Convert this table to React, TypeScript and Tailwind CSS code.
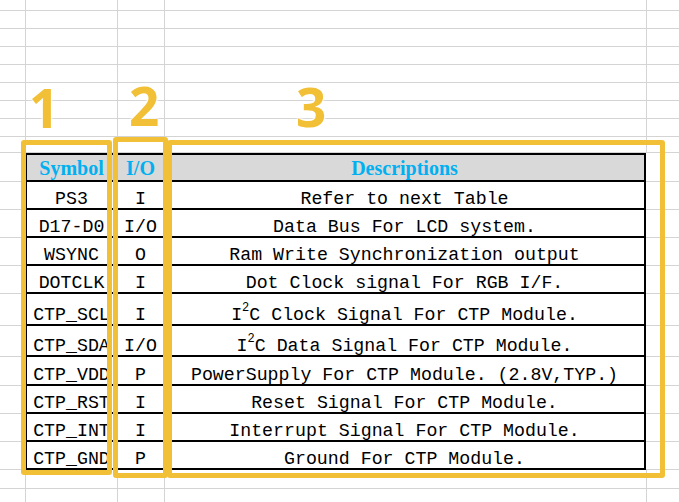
import React from "react";

type Row = {
  sym: string;
  io: string;
  desc: React.ReactNode;
  h: string;
};

const Sup2 = () => (
  <span className="relative -top-[9px] text-[12px] tracking-[0px]">2</span>
);

const rows: Row[] = [
  { sym: "PS3", io: "I", desc: "Refer to next Table", h: "h-[28px]" },
  { sym: "D17-D0", io: "I/O", desc: "Data Bus For LCD system.", h: "h-[28px]" },
  { sym: "WSYNC", io: "O", desc: "Ram Write Synchronization output", h: "h-[28px]" },
  { sym: "DOTCLK", io: "I", desc: "Dot Clock signal For RGB I/F.", h: "h-[28px]" },
  {
    sym: "CTP_SCL",
    io: "I",
    desc: (
      <>
        I<Sup2 />C Clock Signal For CTP Module.
      </>
    ),
    h: "h-[32px]",
  },
  {
    sym: "CTP_SDA",
    io: "I/O",
    desc: (
      <>
        I<Sup2 />C Data Signal For CTP Module.
      </>
    ),
    h: "h-[31px]",
  },
  { sym: "CTP_VDD", io: "P", desc: "PowerSupply For CTP Module. (2.8V,TYP.)", h: "h-[29px]" },
  { sym: "CTP_RST", io: "I", desc: "Reset Signal For CTP Module.", h: "h-[28px]" },
  { sym: "CTP_INT", io: "I", desc: "Interrupt Signal For CTP Module.", h: "h-[28px]" },
  { sym: "CTP_GND", io: "P", desc: "Ground For CTP Module.", h: "h-[28px]" },
];

const grid = "border-[#d4d4d4]";

function GridRow({ h }: { h: string }) {
  return (
    <div className={`flex ${h} shrink-0`}>
      <div className={`w-[26px] shrink-0 border-r border-b ${grid}`} />
      <div className={`w-[92px] shrink-0 border-r border-b ${grid}`} />
      <div className={`w-[47px] shrink-0 border-r border-b ${grid}`} />
      <div className={`w-[482px] shrink-0 border-r border-b ${grid}`} />
      <div className={`flex-1 border-b ${grid}`} />
    </div>
  );
}

const body =
  "font-['Liberation_Mono',monospace] text-[18.25px] text-black leading-none whitespace-nowrap overflow-hidden";
const cellBase = "shrink-0 border-black border-b-2 border-r-2 flex items-end justify-center";
const label =
  "absolute font-['Open_Sans',sans-serif] font-bold text-[53px] leading-none text-[#f2c037] [text-shadow:0_0_3px_#fff,0_0_3px_#fff,0_0_3px_#fff]";

export default function App() {
  return (
    <div className="relative w-[679px] h-[502px] overflow-hidden bg-white">
      <div className="flex flex-col">
        <GridRow h="h-[11px]" />
        <GridRow h="h-[18px]" />
        <GridRow h="h-[18px]" />
        <GridRow h="h-[18px]" />
        <GridRow h="h-[18px]" />
        <GridRow h="h-[18px]" />
        <GridRow h="h-[18px]" />
        <GridRow h="h-[18px]" />
        <GridRow h="h-[16px]" />

        {/* header */}
        <div className="flex h-[29px] shrink-0">
          <div className={`w-[25px] shrink-0 border-b ${grid}`} />
          <div className={`w-[93px] ${cellBase} border-t-2 border-l-2 bg-[#d9d9d9] pb-[2px]`}>
            <span className="font-['Liberation_Serif',serif] font-bold text-[20px] leading-none text-[#00b0f0]">
              Symbol
            </span>
          </div>
          <div className={`w-[47px] ${cellBase} border-t-2 bg-[#d9d9d9] pb-[2px]`}>
            <span className="font-['Liberation_Serif',serif] font-bold text-[20px] leading-none text-[#00b0f0]">
              I/O
            </span>
          </div>
          <div className={`w-[481px] ${cellBase} border-t-2 bg-[#d9d9d9] pb-[2px]`}>
            <span className="font-['Liberation_Serif',serif] font-bold text-[20px] leading-none text-[#00b0f0]">
              Descriptions
            </span>
          </div>
          <div className={`flex-1 border-b ${grid}`} />
        </div>

        {rows.map((r, i) => (
          <div key={i} className={`flex ${r.h} shrink-0`}>
            <div className={`w-[25px] shrink-0 border-b ${grid}`} />
            <div className={`w-[93px] ${cellBase} border-l-2 pb-[0px] ${body}`}>
              <span>{r.sym}</span>
            </div>
            <div className={`w-[47px] ${cellBase} pb-[0px] ${body}`}>
              <span>{r.io}</span>
            </div>
            <div className={`w-[481px] ${cellBase} pb-[0px] ${body}`}>
              <span>{r.desc}</span>
            </div>
            <div className={`flex-1 border-b ${grid}`} />
          </div>
        ))}

        <GridRow h="h-[19px]" />
        <GridRow h="h-[18px]" />
      </div>

      {/* big labels */}
      <span className={`${label} left-[29px] top-[81px]`}>1</span>
      <span className={`${label} left-[129px] top-[79px]`}>2</span>
      <span className={`${label} left-[296px] top-[80px]`}>3</span>

      {/* highlight boxes */}
      <div className="absolute left-[21px] top-[140px] w-[91px] h-[335px] border-[5px] border-[#f2c037] rounded-[3px]" />
      <div className="absolute left-[113px] top-[137px] w-[55px] h-[341px] border-[5px] border-[#f2c037] rounded-[3px]" />
      <div className="absolute left-[167px] top-[140px] w-[498px] h-[338px] border-[5px] border-[#f2c037] rounded-[3px]" />
    </div>
  );
}
